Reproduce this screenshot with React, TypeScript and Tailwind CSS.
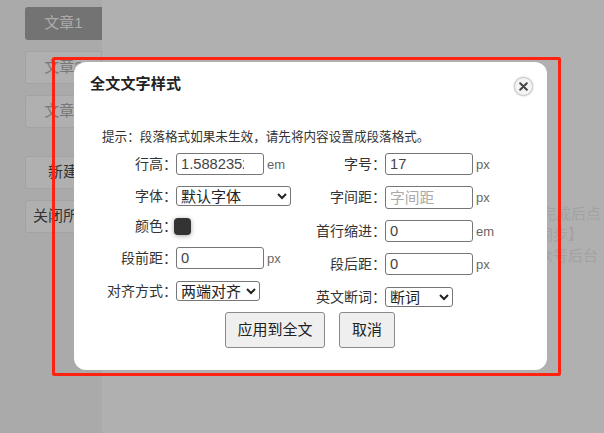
const FONT = "font-['Liberation_Sans','Noto_Sans_CJK_SC',sans-serif]"

const SIDE_ITEMS = ['文章2', '文章3']

function Label({ text }: { text: string }) {
  return <span className="-mr-px w-[103px] shrink-0 whitespace-nowrap text-right text-[14px] leading-[17px] text-[#333]">{text}：</span>
}

function Field({ label, unit, value, placeholder, tall }: { label: string; unit: string; value?: string; placeholder?: string; tall?: boolean }) {
  return (
    <div className="flex items-center">
      <Label text={label} />
      <input
        readOnly
        type={placeholder ? 'text' : 'number'}
        value={value}
        placeholder={placeholder}
        className={`${tall ? 'h-[23px]' : 'h-[22px]'} w-[88px] shrink-0 rounded-[3px] border border-[#767676] bg-white px-[4px] text-[14.7px] text-[#444] outline-none placeholder:text-[#aaa]`}
      />
      <span className="ml-[3px] text-[13px] leading-[17px] text-[#666]">{unit}</span>
    </div>
  )
}

function Picker({ label, options, width }: { label: string; options: string[]; width: string }) {
  return (
    <div className="flex items-center">
      <Label text={label} />
      <select defaultValue={options[0]} className={`h-[20px] shrink-0 rounded-[3px] border border-[#767676] bg-white text-[15px] leading-[18px] text-[#222] ${width}`}>
        {options.map((o) => <option key={o}>{o}</option>)}
      </select>
    </div>
  )
}

export default function App() {
  return (
    <div className={`relative flex h-[433px] w-[604px] overflow-hidden bg-[#b0b0b0] ${FONT}`}>
      {/* page behind the mask */}
      <div className="flex h-full w-[102px] flex-col bg-[#a9aaa9] pl-[25px] pt-[7px] text-[15px]">
        <div className="flex h-[33px] items-center justify-center rounded-l-[3px] bg-[#737373] text-[#ababab]">文章1</div>
        <div className="mt-[11px] flex flex-col gap-[11px]">
          {SIDE_ITEMS.map((t) => (
            <div key={t} className="flex h-[33px] items-center justify-center rounded-l-[3px] border border-[#a3a3a3] bg-[#b0b0b0] text-[#777]">{t}</div>
          ))}
        </div>
        <div className="mt-[28px] flex h-[33px] items-center whitespace-nowrap rounded-l-[3px] border border-[#a3a3a3] bg-[#b0b0b0] pl-[22px] text-[#333]">新建文章</div>
        <div className="mt-[11px] flex h-[33px] items-center overflow-hidden whitespace-nowrap rounded-l-[3px] border border-[#a3a3a3] bg-[#b0b0b0] pl-[7px] text-[#333]">关闭所有</div>
      </div>
      <div className="flex flex-1 flex-col items-end pr-[3px] pt-[203px] text-[15px] leading-[21px] text-[#a2a2a2]">
        <span>完成后点</span>
        <span className="mr-[18px]">同步】</span>
        <span className="mr-[3px]">众号后台</span>
      </div>

      {/* red annotation frame */}
      <div className="absolute left-[52px] top-[57px] h-[319px] w-[509px] rounded-[2px] border-[3px] border-[#ff2211]" />

      {/* dialog */}
      <div className="absolute left-[74px] top-[62px] h-[308px] w-[473px] rounded-[12px] bg-white">
        <h2 className="pl-[16px] pt-[12px] text-[15px] font-bold leading-[20px] tracking-[0.2px] text-[#222]">全文文字样式</h2>
        <button className="absolute right-[14px] top-[15px] flex h-[19px] w-[19px] items-center justify-center rounded-full border border-[#ccc] bg-[#f4f4f4] shadow-[0_0_2px_#bbb]">
          <svg width="9" height="9" viewBox="0 0 9 9">
            <path d="M1.2 1.2 7.8 7.8M7.8 1.2 1.2 7.8" stroke="#444" strokeWidth="2" strokeLinecap="round" />
          </svg>
        </button>
        <p className="pl-[28px] pt-[34px] text-[12.6px] leading-[18px] text-[#333]">提示：段落格式如果未生效，请先将内容设置成段落格式。</p>

        <div className="mt-[7px] flex">
          <div className="flex w-[209px] flex-col">
            <Field label="行高" unit="em" value="1.588235294" />
            <div className="mt-[11px]"><Picker label="字体" options={['默认字体']} width="w-[115px]" /></div>
            <div className="mt-[12px] flex items-center">
              <Label text="颜色" />
              <span className="-ml-[2px] h-[17px] w-[17px] shrink-0 rounded-[4px] bg-[#333] shadow-[0_1px_5px_rgba(0,0,0,0.35)]" />
            </div>
            <div className="mt-[12px]"><Field label="段前距" unit="px" value="0" /></div>
            <div className="mt-[12px]"><Picker label="对齐方式" options={['两端对齐']} width="w-[84px]" /></div>
          </div>
          <div className="flex flex-col">
            <Field label="字号" unit="px" value="17" />
            <div className="mt-[11px]"><Field label="字间距" unit="px" placeholder="字间距" tall /></div>
            <div className="mt-[11px]"><Field label="首行缩进" unit="em" value="0" /></div>
            <div className="mt-[11px]"><Field label="段后距" unit="px" value="0" /></div>
            <div className="mt-[12px]"><Picker label="英文断词" options={['断词']} width="w-[68px]" /></div>
          </div>
        </div>

        <div className="absolute left-[151px] top-[250px] flex gap-[14px]">
          <button className="h-[36px] w-[100px] rounded-[3px] border border-[#8a8a8a] bg-[#efefef] text-[15px] text-[#222]">应用到全文</button>
          <button className="h-[36px] w-[56px] rounded-[3px] border border-[#8a8a8a] bg-[#efefef] text-[15px] text-[#222]">取消</button>
        </div>
      </div>
    </div>
  )
}
